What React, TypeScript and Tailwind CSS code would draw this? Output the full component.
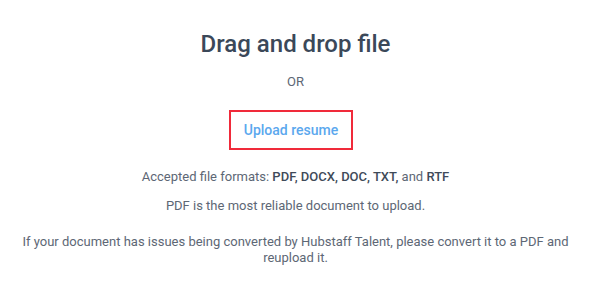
export default function App() {
  return (
    <div className="min-h-screen bg-white px-[18px] font-['Roboto',sans-serif] text-[#5d6775]">
      <div className="flex flex-col items-center text-center">
        <h1 className="mt-[29px] text-[24px] font-medium leading-[30px] text-[#3b4859]">
          Drag and drop file
        </h1>
        <p className="mt-[15px] text-[13px] leading-[16px]">OR</p>
        <button className="mr-[9px] mt-[20px] flex h-[40px] w-[124px] items-center justify-center border-2 border-[#f02a3a] text-[14px] font-medium text-[#5ba8ee]">
          Upload resume
        </button>
        <p className="mt-[19px] text-[13px] leading-[16px]">
          Accepted file formats: <span className="font-medium text-[#3f4a59]">PDF, DOCX, DOC, TXT,</span> and{' '}
          <span className="font-medium text-[#3f4a59]">RTF</span>
        </p>
        <p className="mt-[13px] text-[13px] leading-[16px]">PDF is the most reliable document to upload.</p>
        <p className="mt-[20px] text-[13px] leading-[16px]">
          If your document has issues being converted by Hubstaff Talent, please convert it to a PDF and reupload it.
        </p>
      </div>
    </div>
  );
}
